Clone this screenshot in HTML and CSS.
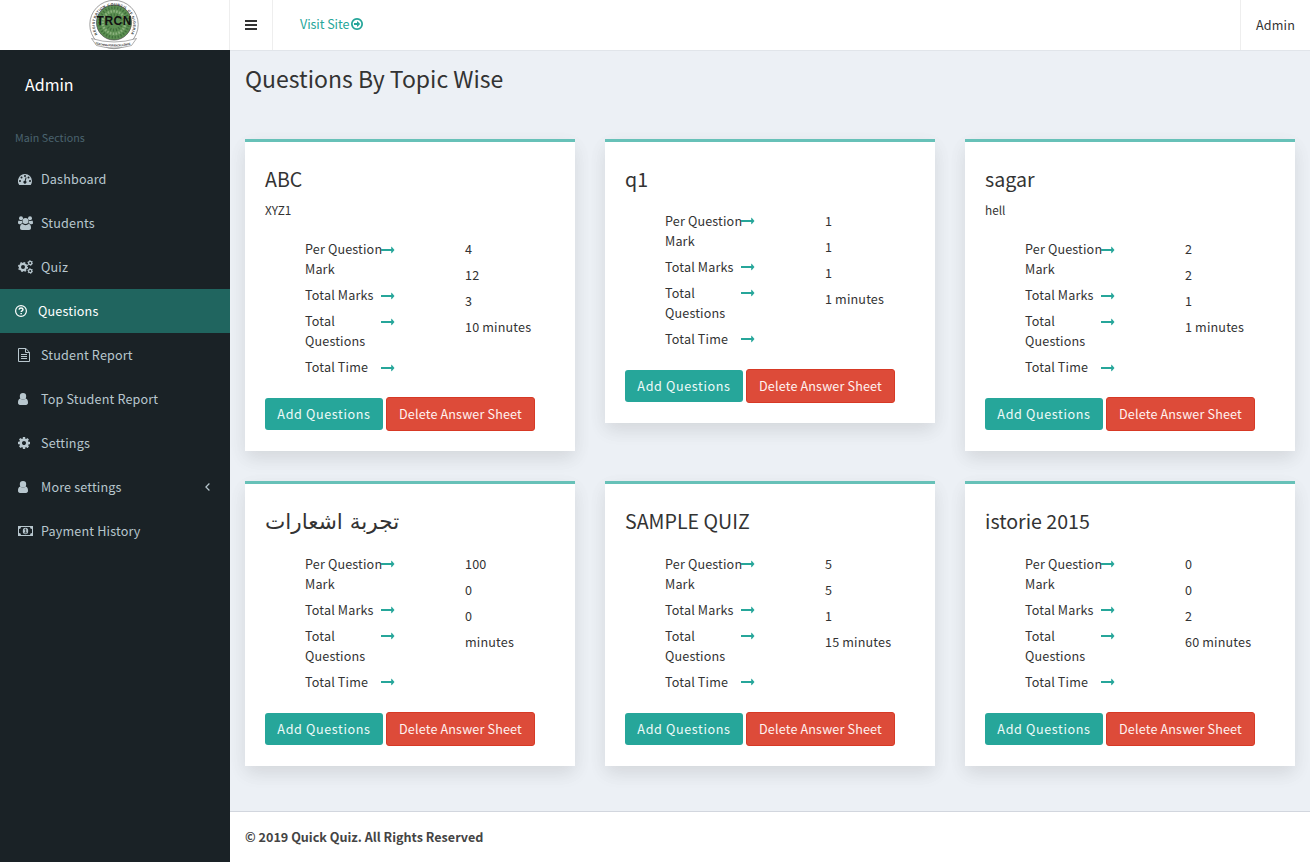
FILE: index.html
```html
<!DOCTYPE html>
<html lang="en">
<head>
<meta charset="utf-8">
<title>Questions By Topic Wise</title>
<link rel="stylesheet" href="styles.css">
</head>
<body>
<svg class="defs" width="0" height="0">
  <symbol id="user" viewBox="0 0 10 12"><path d="M5 0a3 3 0 0 1 0 6.400A3 3 0 0 1 5 0zM2.400 5.500c1.500 1.600 3.700 1.600 5.200 0C9.500 5.500 10 7.800 10 9.800c0 1.300-.8 2.200-2 2.200H2c-1.200 0-2-.9-2-2.200 0-2 .5-4.300 2.400-4.300z"/></symbol>
  <symbol id="cog" viewBox="128 128 1536 1536"><path d="M1152 896q0-106-75-181t-181-75-181 75-75 181 75 181 181 75 181-75 75-181zm512-109v222q0 12-8 23t-20 13l-185 28q-19 54-39 91 35 50 107 138 10 12 10 25t-9 23q-27 37-99 108t-94 71q-12 0-26-9l-138-108q-44 23-91 38-16 136-29 186-7 28-36 28h-222q-14 0-24.5-8.5t-11.5-21.5l-28-184q-49-16-90-37l-141 107q-10 9-25 9-14 0-25-11-126-114-165-168-7-10-7-23 0-12 8-23 15-21 51-66.5t54-70.5q-27-50-41-99l-183-27q-13-2-21-12.5t-8-23.5v-222q0-12 8-23t19-13l186-28q14-46 39-92-40-57-107-138-10-12-10-24 0-10 9-23 26-36 98.5-107.5t94.5-71.5q13 0 26 10l138 107q44-23 91-38 16-136 29-186 7-28 36-28h222q14 0 24.5 8.5t11.5 21.5l28 184q49 16 90 37l142-107q9-9 24-9 13 0 25 10 129 119 165 170 7 8 7 22 0 12-8 23-15 21-51 66.5t-54 70.5q26 50 41 98l183 28q13 2 21 12.5t8 23.5z"/></symbol>
  <symbol id="arrow" viewBox="0 0 14 8"><path d="M.3 3h9.900V1.200c0-.4.4-.5.7-.2L13.300 3.700c.2.2.2.4 0 .6L10.900 7c-.3.3-.7.200-.7-.2V5H.3C.1 5 0 4.900 0 4.700V3.300C0 3.100.1 3 .3 3z"/></symbol>
</svg>

<header class="topbar">
  <div class="brand">
    <svg class="logo" width="52" height="50" viewBox="0 0 52 50">
      <circle cx="26" cy="24.500" r="24.200" fill="#fff" stroke="#777" stroke-width=".7"/>
      <circle cx="26" cy="22.500" r="17.500" fill="#5c8f52" stroke="#444" stroke-width=".7"/>
      <circle cx="26" cy="22.500" r="14.700" fill="none" stroke="#40703c" stroke-width="2.500" stroke-dasharray="1.300 1.700"/>
      <circle cx="26" cy="22.500" r="11.300" fill="none" stroke="#8bb17e" stroke-width="2.500" stroke-dasharray="1.600 1.300"/>
      <circle cx="26" cy="22.500" r="7.500" fill="none" stroke="#40703c" stroke-width="3" stroke-dasharray="1.200 1.700"/>
      <path id="ring" d="M9.500 34.500A19.200 19.200 0 1 1 42.500 34.500" fill="none"/>
      <text class="logo-ring"><textPath href="#ring" textLength="80">REGISTRATION COUNCIL OF NIGERIA</textPath></text>
      <path d="M3.500 38.500q22.500 7 45 0l-5 7q-17.500 5-35 0z" fill="#fff" stroke="#777" stroke-width=".6"/>
      <path id="ribbon" d="M7 44q19 5 38 0" fill="none"/>
      <text class="logo-ribbon"><textPath href="#ribbon" textLength="36">TEACHING FOR EXCELLENCE</textPath></text>
      <text class="logo-name" x="26" y="24.500" text-anchor="middle" textLength="35">TRCN</text>
    </svg>
  </div>
  <div class="toggle"><svg width="12" height="10" viewBox="0 0 12 10"><path d="M0 0h12v2H0zM0 4h12v2H0zM0 8h12v2H0z"/></svg></div>
  <a class="visit">Visit Site <svg width="12" height="12" viewBox="128 128 1536 1536"><path d="M1280 896q0 14-9 23l-320 320q-9 9-23 9-13 0-22.500-9.500t-9.500-22.500v-192h-352q-13 0-22.500-9.500t-9.500-22.500v-192q0-13 9.500-22.500t22.500-9.500h352v-192q0-14 9-23t23-9q12 0 24 10l319 319q9 9 9 23zm160 0q0-148-73-273t-198-198-273-73-273 73-198 198-73 273 73 273 198 198 273 73 273-73 198-198 73-273zm224 0q0 209-103 385.500t-279.500 279.500-385.500 103-385.500-103-279.500-279.500-103-385.500 103-385.500 279.500-279.500 385.500-103 385.500 103 279.500 279.500 103 385.500z"/></svg></a>
  <div class="account">Admin</div>
</header>

<div class="shell">
  <aside class="sidebar">
    <div class="user-name">Admin</div>
    <div class="section">Main Sections</div>
    <nav class="menu">
      <a class="item"><span class="icon"><svg width="14" height="11" viewBox="0 0 14 11"><path fill-rule="evenodd" d="M7 0a7 7 0 0 1 7 7c0 1.400-.4 2.700-1.100 3.800-.1.100-.2.200-.4.200h-11c-.2 0-.3-.1-.4-.2A7 7 0 0 1 7 0zM2 6a1 1 0 1 0 0 2 1 1 0 0 0 0-2zM3.500 2.500a1 1 0 1 0 0 2 1 1 0 0 0 0-2zM7 1a1 1 0 1 0 0 2 1 1 0 0 0 0-2zM10.500 2.500a1 1 0 1 0 0 2 1 1 0 0 0 0-2zM12 6a1 1 0 1 0 0 2 1 1 0 0 0 0-2zM7.500 3.700l-.8 3a1.500 1.500 0 1 0 1 .2l.8-2.900c.1-.6-.8-.9-1-.3z"/></svg></span>Dashboard</a>
      <a class="item"><span class="icon"><svg width="15" height="14" viewBox="0 0 15 14"><circle cx="3" cy="2.200" r="2"/><circle cx="12" cy="2.200" r="2"/><circle cx="7.500" cy="5" r="3"/><path d="M1 4.500c1 .7 2 .7 3 .3 0 1 .2 1.700.7 2.500-.9 0-1.700.4-2.200.9H1.300C.6 8.200 0 7.800 0 7c0-1.100.2-2.500 1-2.500zM14 4.500c-1 .7-2 .7-3 .3 0 1-.2 1.700-.7 2.500.9 0 1.700.4 2.200.9h1.200c.7 0 1.300-.4 1.300-1.200 0-1.100-.2-2.500-1-2.500zM4.500 8c1.700 1.500 4.300 1.500 6 0 2 0 2.500 2.200 2.500 4 0 1.200-.8 2-2 2H4c-1.200 0-2-.8-2-2 0-1.800.5-4 2.500-4z"/></svg></span>Students</a>
      <a class="item"><span class="icon"><svg width="15" height="14" viewBox="0 0 15 14"><g fill="none" stroke="currentColor"><circle cx="5" cy="7" r="3.100" stroke-width="2.200"/><circle cx="5" cy="7" r="4.500" stroke-width="1.200" stroke-dasharray="1.800 1.734"/><circle cx="12.200" cy="3" r="1.650" stroke-width="1.300"/><circle cx="12.200" cy="3" r="2.500" stroke-width=".8" stroke-dasharray="1.300 1.318"/><circle cx="12.200" cy="11" r="1.650" stroke-width="1.300"/><circle cx="12.200" cy="11" r="2.500" stroke-width=".8" stroke-dasharray="1.300 1.318"/></g></svg></span>Quiz</a>
      <a class="item active"><span class="icon"><svg width="12" height="12" viewBox="0 0 12 12"><circle cx="6" cy="6" r="5.400" fill="none" stroke="currentColor" stroke-width="1.200"/><path d="M4 4.700C4.200 3.500 5 3 6.100 3c1 0 1.900.6 1.900 1.500 0 1.300-1.800 1.300-1.800 2.500" fill="none" stroke="currentColor" stroke-width="1.400"/><path d="M5.400 7.900h1.500v1.400H5.400z"/></svg></span>Questions</a>
      <a class="item"><span class="icon"><svg width="12" height="14" viewBox="0 0 12 14"><path d="M.5.5h7.300l3.700 3.700v9.300H.5zM7.500.5v4h4M3 6.500h6M3 8.500h6M3 10.500h6" fill="none" stroke="currentColor"/></svg></span>Student Report</a>
      <a class="item"><span class="icon"><svg width="10" height="12"><use href="#user"/></svg></span>Top Student Report</a>
      <a class="item"><span class="icon"><svg width="12" height="12"><use href="#cog"/></svg></span>Settings</a>
      <a class="item"><span class="icon"><svg width="10" height="12"><use href="#user"/></svg></span>More settings<svg class="chevron" width="5" height="8" viewBox="0 0 5 8"><path d="M4.400.5L.9 4l3.500 3.500" fill="none" stroke="currentColor" stroke-width="1.200"/></svg></a>
      <a class="item"><span class="icon"><svg width="15" height="10" viewBox="0 0 15 10"><path fill-rule="evenodd" d="M0 0h15v10H0zM3 1H12a2 2 0 0 0 2 2v4a2 2 0 0 0-2 2H3a2 2 0 0 0-2-2V3a2 2 0 0 0 2-2z"/><ellipse cx="7.500" cy="5" rx="2.700" ry="3.200"/><path d="M6.500 3.700l1.200-.8v3.600M6.300 6.900h2.500" fill="none" stroke="#1a2226" stroke-width=".9"/></svg></span>Payment History</a>
    </nav>
  </aside>

  <main class="content">
    <h1 class="page-title">Questions By Topic Wise</h1>
    <div class="cards" id="cards"></div>
    <footer class="footer">© 2019 Quick Quiz. All Rights Reserved</footer>
  </main>
</div>
<script src="cards.js"></script>
</body>
</html>
```
FILE: cards.js
```js
const topics = [
  { title: 'ABC', text: 'XYZ1', values: ['4', '12', '3', '10 minutes'] },
  { title: 'q1', values: ['1', '1', '1', '1 minutes'] },
  { title: 'sagar', text: 'hell', values: ['2', '2', '1', '1 minutes'] },
  { title: 'تجربة اشعارات', arabic: true, values: ['100', '0', '0', 'minutes'] },
  { title: 'SAMPLE QUIZ', values: ['5', '5', '1', '15 minutes'] },
  { title: 'istorie 2015', values: ['0', '0', '2', '60 minutes'] }
];
const labels = ['Per Question<br>Mark', 'Total Marks', 'Total<br>Questions', 'Total Time'];
const arrow = '<svg class="arrow" width="14" height="8"><use href="#arrow"/></svg>';

document.getElementById('cards').innerHTML = topics.map(t => `
  <section class="card">
    <h2 class="card-title${t.arabic ? ' arabic' : ''}">${t.title}</h2>
    ${t.text ? `<p class="card-text">${t.text}</p>` : ''}
    <div class="facts">
      <ul class="labels">${labels.map(l => `<li class="label"><span class="label-text">${l}</span>${arrow}</li>`).join('')}</ul>
      <ul class="values">${t.values.map(v => `<li>${v}</li>`).join('')}</ul>
    </div>
    <div class="actions"><a class="btn add">Add Questions</a><a class="btn delete">Delete Answer Sheet</a></div>
  </section>`).join('');
```
FILE: styles.css
```css
* { box-sizing: border-box; }
body {
  margin: 0;
  background: #ecf0f5;
  color: #333;
  font: 12.6px/20px "Noto Sans CJK SC", "Noto Sans", sans-serif;
  letter-spacing: .15px;
}
h1, h2, p, ul { margin: 0; padding: 0; font-weight: 400; }
ul { list-style: none; }
svg { display: block; fill: currentColor; }
.defs { display: none; }

.topbar { display: flex; height: 50px; background: #fff; }
.brand { width: 230px; display: flex; justify-content: center; }
.logo { margin-left: -2px; }
.logo-ring { font: 700 3.6px "Liberation Sans", sans-serif; fill: #333; letter-spacing: 0; }
.logo-ribbon { font: 700 2.8px "Liberation Sans", sans-serif; fill: #333; letter-spacing: 0; }
.logo-name { font: 700 12px "Liberation Sans", sans-serif; fill: #111; letter-spacing: 0; }
.toggle { width: 44px; padding: 20px 0 0 15px; border: solid #eee; border-width: 0 1px; margin-left: -1px; }
.visit { display: flex; align-items: center; gap: 2px; padding-left: 27px; margin-bottom: 2px; color: #26a69a; letter-spacing: -.08px; }
.account { margin-left: auto; width: 70px; border-left: 1px solid #eee; padding: 15px 0 0 15px; }

.shell { display: flex; height: 812px; }
.sidebar { width: 230px; background: #1a2226; color: #b8c7ce; }
.user-name { height: 69px; padding: 24px 0 0 25px; color: #fff; font-size: 16px; letter-spacing: 0; }
.section { height: 38px; padding: 9px 0 0 15px; color: #4b646f; font-size: 10.7px; letter-spacing: .05px; }
.item { display: flex; align-items: center; height: 44px; padding: 0 20px 0 18px; letter-spacing: .16px; }
.icon { width: 23px; }
.item.active { background: #20655f; color: #fff; padding-left: 15px; }
.chevron { margin-left: auto; }

.content { flex: 1; display: flex; flex-direction: column; border-top: 1px solid #e1e5ea; }
.page-title { padding: 12px 15px 0; font-size: 23px; line-height: 30px; letter-spacing: 0; }
.cards { display: grid; grid-template-columns: repeat(3, 330px); gap: 30px; align-items: start; padding: 46px 15px 0; }
.card { background: #fff; border-top: 3px solid #67c1b8; padding: 25px 20px 20px; box-shadow: 0 8px 17px 0 rgba(0,0,0,.07), 0 6px 20px 0 rgba(0,0,0,.04); }
.card-title { padding-bottom: 1px; font-size: 19.6px; line-height: 24px; letter-spacing: 0; }
.card:nth-child(n+4) .card-title { padding-bottom: 2px; }
.card .card-title.arabic { padding: 1px 0; font-family: "DejaVu Sans", sans-serif; font-size: 21.6px; }
.card-text { margin-top: 8px; font-size: 11.8px; letter-spacing: 0; }
.facts { display: flex; margin-top: 19px; padding-left: 40px; white-space: nowrap; }
.labels { width: 160px; display: grid; gap: 6px; }
.values { display: grid; gap: 6px; align-content: start; }
.label { display: flex; }
.label-text { width: 76px; }
.arrow { margin-top: 6px; color: #26a69a; }
.card:nth-child(1) .arrow, .card:nth-child(3) .arrow { margin-top: 7px; }
.actions { display: flex; align-items: center; gap: 3px; margin-top: 20px; }
.btn { color: #fff; white-space: nowrap; text-align: center; }
.add { width: 118px; height: 32px; line-height: 32px; border-radius: 3px; background: #26a69a; color: #effaf8; letter-spacing: .63px; }
.delete { width: 149px; height: 34px; line-height: 32px; border: 1px solid #d73925; border-radius: 3px; background: #dd4b39; color: #fff2f0; }
.footer { margin-top: auto; height: 51px; padding: 15px; border-top: 1px solid #d2d6de; background: #fff; color: #444; font-weight: 700; letter-spacing: 0; }
```
